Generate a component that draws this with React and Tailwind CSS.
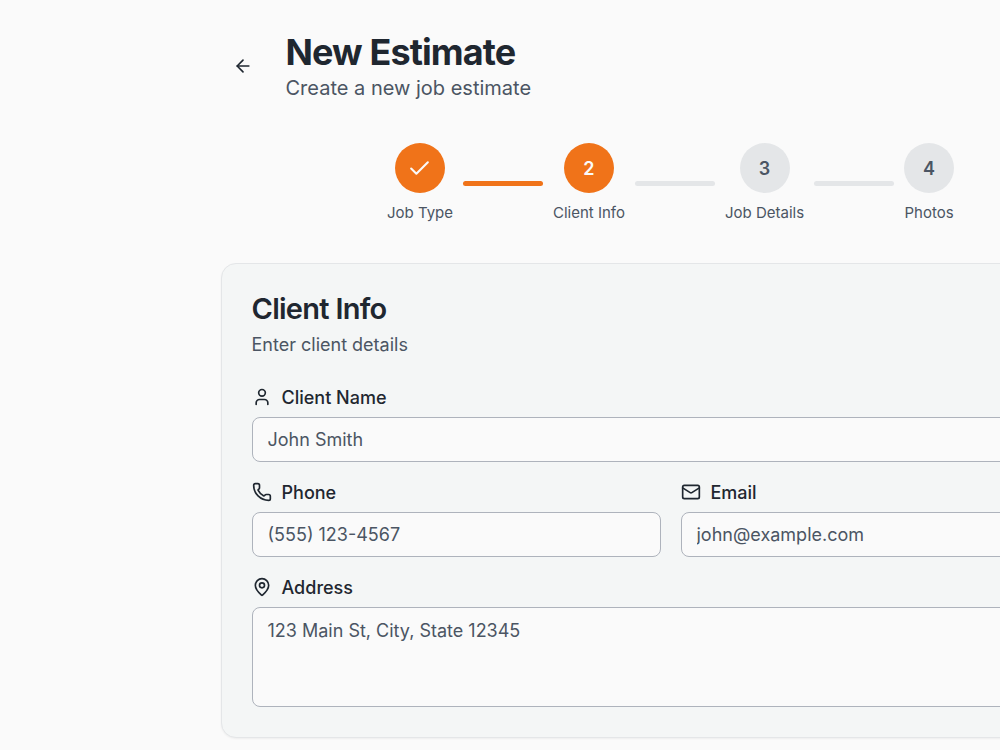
import React, { useState } from "react";
import { ArrowLeft, Check, User, Phone, Mail, MapPin } from "lucide-react";

const steps = ["Job Type", "Client Info", "Job Details", "Photos"];

const fieldClass =
  "w-full rounded-[8px] border border-[#aeb3bc] bg-[#fafafa] px-[15px] text-[#1f2730] placeholder:text-[#4b5563] placeholder:opacity-100 focus:outline-2 focus:outline-[#f07319]";

function Field({ id, label, icon: Icon, children }) {
  return (
    <div>
      <label
        htmlFor={id}
        className="flex items-center gap-[10px] mb-[10px] h-[20px] font-medium"
      >
        <Icon size={20} />
        {label}
      </label>
      {children}
    </div>
  );
}

function Stepper({ current }) {
  return (
    <ol className="flex items-center justify-center gap-[10px]">
      {steps.map((step, index) => (
        <React.Fragment key={step}>
          {index > 0 && (
            <li
              aria-hidden="true"
              className={`w-[80px] h-[5px] rounded-full ${
                index <= current ? "bg-[#f07319]" : "bg-[#e4e6e8]"
              }`}
            />
          )}
          <li className="flex flex-col items-center gap-[8px]">
            <div
              className={`flex items-center justify-center size-[50px] rounded-full text-[18px] font-semibold ${
                index <= current
                  ? "bg-[#f07319] text-[#fafafa]"
                  : "bg-[#e4e6e8] text-[#4b5563]"
              }`}
            >
              {index < current ? (
                <Check size={25} strokeWidth={2} />
              ) : (
                index + 1
              )}
            </div>
            <span className="text-[15px] leading-[23px] text-[#4b5563] whitespace-nowrap">
              {step}
            </span>
          </li>
        </React.Fragment>
      ))}
    </ol>
  );
}

function App() {
  const [client, setClient] = useState({
    name: "",
    phone: "",
    email: "",
    address: "",
  });

  const handleChange = (e) => {
    setClient({ ...client, [e.target.name]: e.target.value });
  };

  return (
    <div className="min-h-screen overflow-x-hidden bg-[#fafafa] font-['Inter',sans-serif] text-[18px] text-[#1f2730]">
      <div className="min-w-[1341px] py-[30px]">
        <main className="w-full max-w-[900px] mx-auto">
          <header className="flex items-center gap-[20px] mb-[41px]">
            <button
              type="button"
              aria-label="Back"
              className="flex items-center justify-center size-[45px] rounded-[8px] hover:bg-[#e4e6e8]"
            >
              <ArrowLeft size={20} />
            </button>
            <div>
              <h1 className="text-[36px] leading-[44px] font-bold tracking-tight">
                New Estimate
              </h1>
              <p className="text-[20px] leading-[28px] text-[#4b5563]">
                Create a new job estimate
              </p>
            </div>
          </header>

          <Stepper current={1} />

          <section className="mt-[39px] rounded-[15px] border border-[#e4e6e8] bg-[#f4f6f6] p-[30px] shadow-xs">
            <h2 className="text-[29px] leading-[30px] font-semibold tracking-tight">
              Client Info
            </h2>
            <p className="mt-[8px] leading-[25px] text-[#4b5563]">
              Enter client details
            </p>

            <form className="flex flex-col gap-[20px] mt-[30px]">
              <Field id="name" label="Client Name" icon={User}>
                <input
                  id="name"
                  name="name"
                  value={client.name}
                  onChange={handleChange}
                  placeholder="John Smith"
                  className={`${fieldClass} block h-[45px]`}
                />
              </Field>
              <div className="grid grid-cols-2 gap-[20px]">
                <Field id="phone" label="Phone" icon={Phone}>
                  <input
                    id="phone"
                    name="phone"
                    type="tel"
                    value={client.phone}
                    onChange={handleChange}
                    placeholder="(555) 123-4567"
                    className={`${fieldClass} block h-[45px]`}
                  />
                </Field>
                <Field id="email" label="Email" icon={Mail}>
                  <input
                    id="email"
                    name="email"
                    type="email"
                    value={client.email}
                    onChange={handleChange}
                    placeholder="john@example.com"
                    className={`${fieldClass} block h-[45px]`}
                  />
                </Field>
              </div>
              <Field id="address" label="Address" icon={MapPin}>
                <textarea
                  id="address"
                  name="address"
                  value={client.address}
                  onChange={handleChange}
                  placeholder="123 Main St, City, State 12345"
                  className={`${fieldClass} block h-[100px] py-[10px] leading-[25px] resize-none`}
                />
              </Field>
            </form>
          </section>
        </main>
      </div>
    </div>
  );
}

export default App;
